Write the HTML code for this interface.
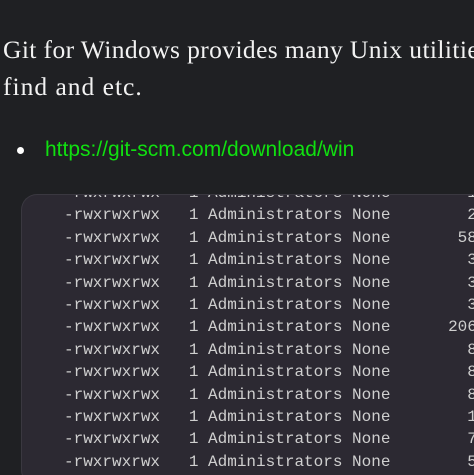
<!DOCTYPE html>
<html><head><meta charset="utf-8"><style>
html,body{margin:0;padding:0;background:#1f2023;width:474px;height:475px;overflow:hidden;position:relative}
.p{position:absolute;left:3px;top:31px;width:471px;overflow:hidden;font-family:"Liberation Serif",serif;font-size:25.5px;letter-spacing:0.4px;line-height:37px;color:#f2f2f2;white-space:nowrap}
.p span{letter-spacing:1px}
.b{position:absolute;left:17px;top:147px;width:7px;height:7px;border-radius:50%;background:#fff}
.a{position:absolute;left:45px;top:138px;font-family:"Liberation Sans",sans-serif;font-size:21px;color:#10e010;white-space:nowrap}
.code{position:absolute;left:21px;top:194px;width:453px;height:290px;background:#2c2932;border:1px solid #3a3840;border-right:none;border-radius:16px 0 0 16px;overflow:hidden}
.code pre{margin:0;position:absolute;left:42px;top:-13px;font-family:"Liberation Mono",monospace;font-size:16px;line-height:22.4px;color:#cfcfcf}
</style></head><body>
<div class="p">Git for Windows provides many Unix utilities<br><span>find and etc.</span></div>
<div class="b"></div>
<div class="a">https://git-scm.com/download/win</div>
<div class="code"><pre>-rwxrwxrwx   1 Administrators None        1
-rwxrwxrwx   1 Administrators None        2
-rwxrwxrwx   1 Administrators None       58
-rwxrwxrwx   1 Administrators None        3
-rwxrwxrwx   1 Administrators None        3
-rwxrwxrwx   1 Administrators None        3
-rwxrwxrwx   1 Administrators None      206
-rwxrwxrwx   1 Administrators None        8
-rwxrwxrwx   1 Administrators None        8
-rwxrwxrwx   1 Administrators None        8
-rwxrwxrwx   1 Administrators None        1
-rwxrwxrwx   1 Administrators None        7
-rwxrwxrwx   1 Administrators None        5
-rwxrwxrwx   1 Administrators None        4</pre></div>
</body></html>
